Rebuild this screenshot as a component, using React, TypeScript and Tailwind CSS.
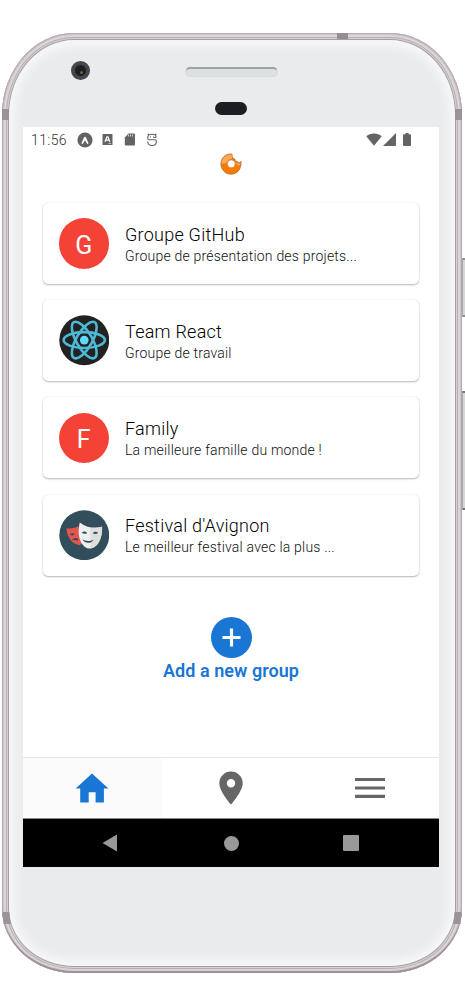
import type { ReactNode } from "react";

type Group = { title: string; text: string; avatar: ReactNode };

function Letter({ children }: { children: string }) {
  return (
    <div className="flex size-[50.500px] items-center justify-center rounded-full bg-[#f44336] pt-[3px] text-[25px] leading-none text-white">
      {children}
    </div>
  );
}

function ReactAvatar() {
  return (
    <svg className="block size-[50.500px]" viewBox="0 0 51 51" fill="none">
      <circle cx="25.5" cy="25.5" r="25.2" fill="#222" />
      <g stroke="#4db8d4" strokeWidth="2.600">
        <ellipse cx="25.5" cy="25.3" rx="20.8" ry="8" />
        <ellipse cx="25.5" cy="25.3" rx="20.8" ry="8" transform="rotate(60 25.5 25.3)" />
        <ellipse cx="25.5" cy="25.3" rx="20.8" ry="8" transform="rotate(120 25.5 25.3)" />
      </g>
      <circle cx="25.5" cy="25.3" r="4.400" fill="#61dafb" />
    </svg>
  );
}

function MasksAvatar() {
  return (
    <svg className="block size-[50.500px]" viewBox="0 0 51 51" fill="none">
      <circle cx="25.5" cy="25.5" r="25.2" fill="#324d5b" />
      <path d="M7.500 18.500c4 .8 8-.2 12-2l4 16.500-2.500 2.500C12.500 34.500 8 27 7.500 18.500Z" fill="#e2574c" />
      <path d="M11 25c1.500-2 3.500-2 5-.5l-2.500 1.200ZM13 30.500c2-2.500 4.500-3 6.500-1.500l-.5 2c-2-1.200-4-.8-6-.5Z" fill="#324d5b" />
      <path d="M21 12.500c6 5 14.500 6.500 22.500 4.500.5 10-3 20-11.500 22C22.500 39 17.500 26 21 12.500Z" fill="#efefef" />
      <path d="M31.500 17.800c4 .5 8 .2 12-.8.5 10-3 20-11.500 22Z" fill="#dedede" />
      <path d="M23 23c1.800-2 4-1.800 5.500.4-2 .9-3.600 1-5.500-.4ZM34 23.500c2-2 4-1.800 5.500-.2-1.700 1.300-3.500 1.400-5.500.2ZM23.500 29.500c3 2 7.500 2.300 11.500.5-2.500 4.500-9 4-11.500-.5Z" fill="#324d5b" />
    </svg>
  );
}

const groups: Group[] = [
  { title: "Groupe GitHub", text: "Groupe de présentation des projets...", avatar: <Letter>G</Letter> },
  { title: "Team React", text: "Groupe de travail", avatar: <ReactAvatar /> },
  { title: "Family", text: "La meilleure famille du monde !", avatar: <Letter>F</Letter> },
  { title: "Festival d'Avignon", text: "Le meilleur festival avec la plus ...", avatar: <MasksAvatar /> },
];

function GroupCard({ title, text, avatar }: Group) {
  return (
    <article className="flex h-[81px] items-center rounded-[5px] bg-white pl-[15.500px] shadow-[0_1px_2px_rgba(0,0,0,0.28),0_0_1px_rgba(0,0,0,0.16)]">
      {avatar}
      <div className="ml-4 pt-[1.500px] whitespace-nowrap">
        <h2 className="text-[18px] leading-[23px] font-light tracking-[0.250px] text-black">{title}</h2>
        <p className="text-[14px] leading-[20px] font-light tracking-[0.200px] text-[#111]">{text}</p>
      </div>
    </article>
  );
}

function StatusBar() {
  return (
    <div className="flex h-[25px] items-center pl-[8px] text-[#646464]">
      <span className="w-[46px] text-[14px] leading-none font-light tracking-[0.4px] text-[#333]">11:56</span>
      <svg className="size-4" viewBox="0 0 16 16">
        <circle cx="8" cy="8" r="7.6" fill="currentColor" />
        <path d="M4.500 11.300 7 5.500q1-1.500 2 0l2.500 5.800-1 .9L8 8.300l-2.500 3.900Z" fill="#fff" />
      </svg>
      <svg className="ml-[9px] h-[11px] w-[11px]" viewBox="0 0 11 11">
        <path d="M.5 0h10v11H.5Z" fill="currentColor" />
        <path d="m3 7.800 1.900-5h1l1.900 5M3.700 6.200h3.400" fill="none" stroke="#fff" strokeWidth="1.200" />
        <path d="M6.500 9.400H9" stroke="#ccc" />
      </svg>
      <svg className="ml-[11px] h-[13px] w-3" viewBox="0 0 12 13">
        <path d="M4.500.5H10a1 1 0 0 1 1 1v10a1 1 0 0 1-1 1H1.800a1 1 0 0 1-1-1v-7Z" fill="currentColor" />
        <path d="M4.500 1.500v2M6.500 1.500v2M8.500 1.500v2" stroke="#ddd" strokeWidth=".9" />
      </svg>
      <svg className="ml-[10px] h-[14px] w-3" viewBox="0 0 12 14" fill="none" stroke="currentColor" strokeWidth="1.100">
        <path d="M10.200 4.200C9.500.3 2.500.3 1.800 4.200v1.300q0 1.200 1.200 1.200h6q1.300 0 1.300 1.300v1.300c-.4 4.300-8 4.300-8.500 0V8.500M10.200 4.500H7.500M1.800.6l1 1.300M10.200.6l-1 1.300" />
        <path d="M4 4h1M7 4h1" />
      </svg>
      <div className="mr-[28px] ml-auto flex items-center pb-px">
        <svg className="h-[13px] w-4" viewBox="0 0 16 13"><path d="M.3 3.300C4.500-.4 11.500-.4 15.700 3.300L8 12.700Z" fill="currentColor" /></svg>
        <svg className="ml-px h-[13px] w-[13px]" viewBox="0 0 13 13"><path d="M13 0v13H0Z" fill="currentColor" /></svg>
        <svg className="ml-[7px] h-[13px] w-2" viewBox="0 0 8 13"><path d="M2.500 0h3v1.200H7a1 1 0 0 1 1 1V12a1 1 0 0 1-1 1H1a1 1 0 0 1-1-1V2.200a1 1 0 0 1 1-1h1.500Z" fill="currentColor" /></svg>
      </div>
    </div>
  );
}

function Logo() {
  return (
    <svg className="mx-auto mt-[1px] block h-[22px] w-[22px]" viewBox="0 0 22 22">
      <path d="M12 1C5.500.2.800 5 .900 11c.2 5.800 4.500 10.200 10.200 10.200 6 0 10.500-5 10-12.700l-2 1.300q-1.400-.1-1.700-1.400-1.800.4-2.300-1.200.2-1.500-1.300-1.700Q12 5.300 12.300 3.800Z" fill="#f57c00" stroke="#9c5a24" strokeWidth=".6" />
      <path d="M11.800 1.500C6 .9 1.600 5 1.400 10.700q3.900.5 6.200-2.500 1-2.500 4.900-2.500-.7-1-.5-2ZM15.500 9l2.600 1.500 2.600-.8q-.5 3-3.200 2.800Z" fill="#ffb370" fillOpacity=".8" />
      <circle cx="11.300" cy="10.800" r="3.900" fill="#fff" stroke="#c1793c" strokeWidth=".6" />
    </svg>
  );
}

function TabBar() {
  return (
    <nav className="grid h-[61px] shrink-0 grid-cols-3 border-t border-[#e6e6e6] text-[#666]">
      <div className="flex items-center justify-center bg-[#fbfbfb]">
        <svg className="h-[30px] w-[34px]" viewBox="0 0 34 30"><path d="M17 .5.700 15.500h4.500v14h8.500V19.200h6.900v10.300h8.300v-14h4.500Z" fill="#1976d5" /></svg>
      </div>
      <div className="flex items-center justify-center">
        <svg className="h-[34px] w-[24px]" viewBox="0 0 24 34"><path fillRule="evenodd" d="M12 .5A11.700 11.700 0 0 0 .3 12.200C.3 20.500 12 33.500 12 33.500s11.700-13 11.700-21.300A11.700 11.700 0 0 0 12 .5Zm0 7.500a4.200 4.200 0 1 1 0 8.400A4.200 4.200 0 0 1 12 8Z" fill="currentColor" /></svg>
      </div>
      <div className="flex items-center justify-center">
        <svg className="h-[22px] w-[30px]" viewBox="0 0 30 22"><path d="M0 2.500h30M0 11h30M0 19.300h30" stroke="currentColor" strokeWidth="3.200" /></svg>
      </div>
    </nav>
  );
}

function SystemBar() {
  return (
    <div className="flex h-[49px] shrink-0 items-center border-t border-[#888] bg-black pl-[79px] text-[#999]">
      <svg className="h-[18px] w-4" viewBox="0 0 16 18"><path d="M15 .5v17L.5 9Z" fill="currentColor" /></svg>
      <div className="ml-[105.500px] size-[15px] rounded-full bg-[#999]" />
      <div className="ml-[104px] size-4 rounded-[1px] bg-[#999]" />
    </div>
  );
}

export default function App() {
  return (
    <div className="h-[1008px] w-[465px] overflow-hidden bg-white pt-[33px] pl-[2px] font-[Roboto,sans-serif]">
      <div className="relative h-[940px] w-[460px] rounded-[72px_72px_72px_72px/82px_82px_65px_65px] bg-[#eaebed] pt-[94px] pl-[21px] shadow-[inset_0_-2px_1px_#9a9095,inset_0_0_0_1px_#b5afb2,inset_0_0_0_2px_#cbc4c8,inset_0_0_0_4px_#dcd5d9,inset_0_0_0_5px_#b5aeb2,inset_0_0_0_6px_#d8d0d4,inset_0_0_0_7px_#a59fa3,inset_0_0_8px_13px_#f6f7f9]">
        <div className="absolute top-0 left-[335px] h-[6px] w-[11px] bg-[#958d92]" />
        <div className="absolute top-[76px] left-0 h-[11px] w-[7px] bg-[#9a9297]" />
        <div className="absolute top-[76px] right-0 h-[11px] w-[7px] bg-[#9a9297]" />
        <div className="absolute top-[879px] left-px h-[12px] w-[7px] skew-x-6 bg-[#9a9297]" />
        <div className="absolute top-[879px] right-px h-[12px] w-[7px] -skew-x-6 bg-[#9a9297]" />
        <div className="absolute top-[225px] -right-[4px] h-[59px] w-[4px] border-y-2 border-l border-y-[#92918f] border-l-[#aaa] bg-[#d6d8d5]" />
        <div className="absolute top-[358px] -right-[4px] h-[119px] w-[4px] border-y-2 border-l border-y-[#777] border-l-[#aaa] bg-[#d6d8d5]" />
        <div className="absolute top-[28px] left-[69px] flex size-[19px] items-center justify-center rounded-full border-[4px] border-[#44474b] bg-[#1c1f22]">
          <div className="mt-1 ml-px size-[3px] rounded-full bg-[#656534]" />
        </div>
        <div className="absolute top-[34px] left-[183px] h-[10px] w-[93px] rounded-full border border-t-2 border-[#d5dadd] border-t-[#9aa3a9] bg-[#dce0e3]" />
        <div className="absolute top-[69px] left-[213px] h-[13px] w-[32px] rounded-full bg-[#1c1e23]" />

        <main className="flex h-[740px] w-[416px] flex-col bg-white">
          <StatusBar />
          <Logo />
          <section className="mx-auto mt-[28px] flex w-[376px] flex-col gap-[16.200px]">
            {groups.map((group) => (
              <GroupCard key={group.title} {...group} />
            ))}
          </section>
          <div className="mt-[41px] flex flex-1 flex-col items-center text-[#1976d5]">
            <button className="flex size-[41px] items-center justify-center rounded-full bg-[#1976d5]" aria-label="Add">
              <svg className="size-[19px]" viewBox="0 0 19 19"><path d="M9.500.5v18M.5 9.500h18" stroke="#fff" strokeWidth="3.200" /></svg>
            </button>
            <span className="text-[18px] leading-[26px] font-semibold tracking-[0.050px]">Add a new group</span>
          </div>
          <TabBar />
          <SystemBar />
        </main>
      </div>
    </div>
  );
}
